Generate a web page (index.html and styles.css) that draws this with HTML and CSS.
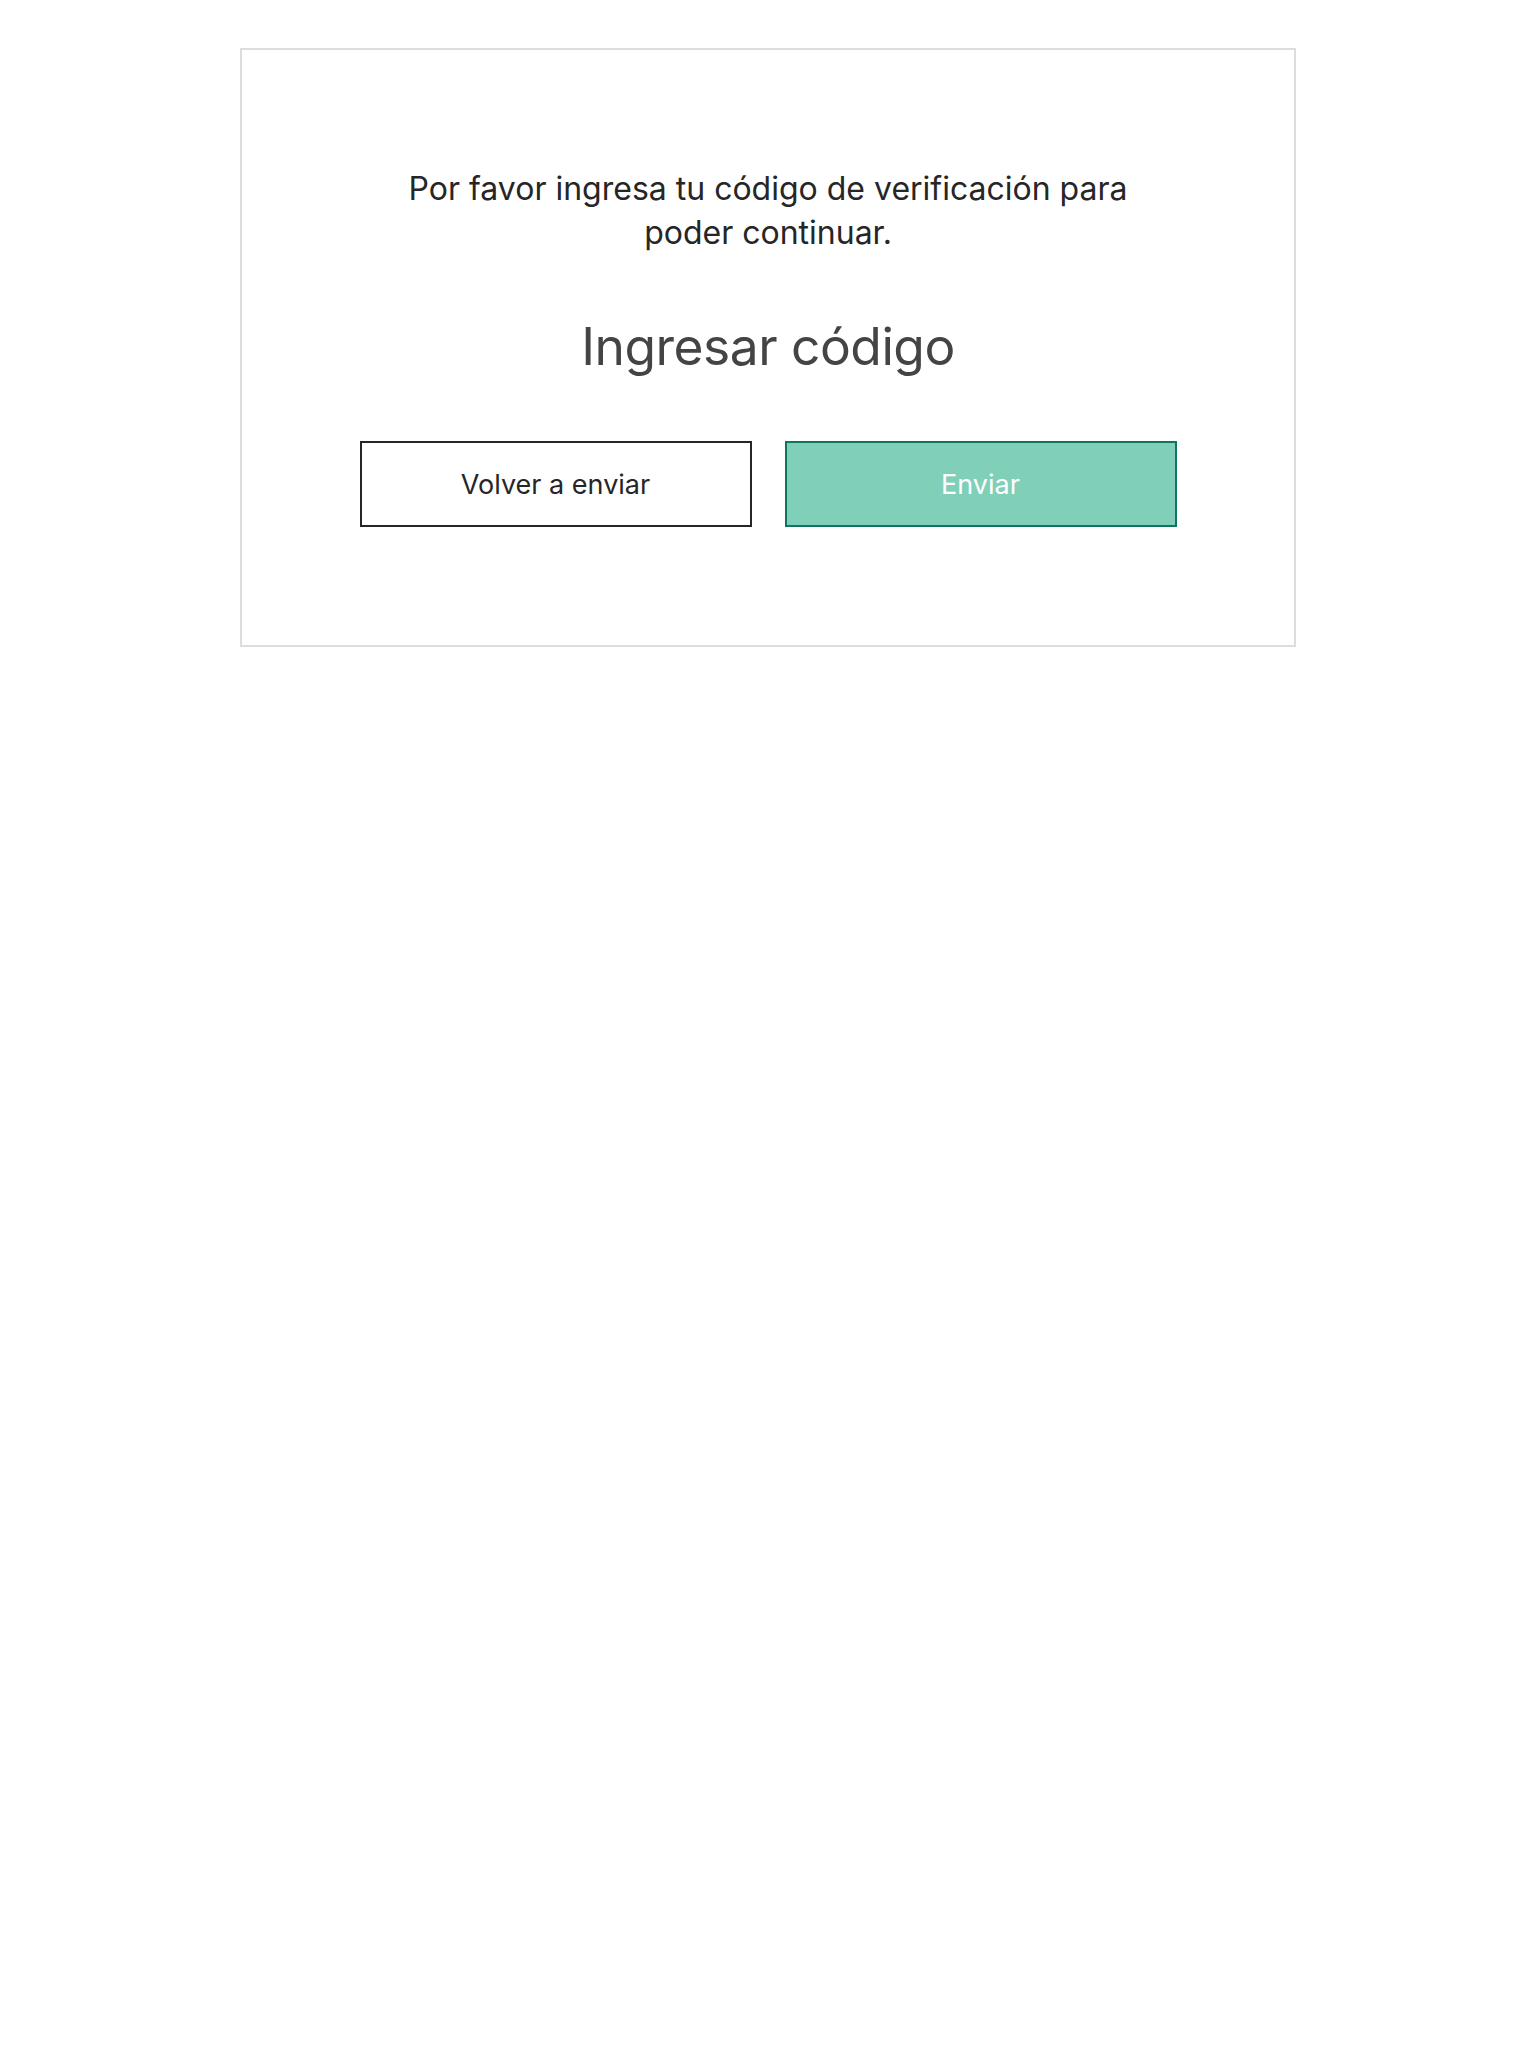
FILE: index.html
```html
<!DOCTYPE html>
<html lang="es">
<head>
<meta charset="utf-8">
<title>Ingresar código</title>
<link rel="stylesheet" href="styles.css">
</head>
<body>
<main class="card">
  <p class="lead">Por favor ingresa tu código de verificación para poder continuar.</p>
  <h1 class="title">Ingresar código</h1>
  <div class="actions">
    <button class="btn btn-outline" type="button">Volver a enviar</button>
    <button class="btn btn-primary" type="button">Enviar</button>
  </div>
</main>
</body>
</html>
```
FILE: styles.css
```css
html, body {
  margin: 0;
  padding: 0;
  background: #ffffff;
}
body {
  font-family: Inter, "Noto Sans", sans-serif;
  padding-top: 48px;
}
.card {
  box-sizing: border-box;
  width: 1056px;
  height: 599px;
  margin: 0 auto;
  border: 2px solid #dddddd;
  display: flex;
  flex-direction: column;
  align-items: center;
  padding-top: 117px;
}
.lead {
  margin: 0;
  max-width: 760px;
  text-align: center;
  font-size: 32px;
  line-height: 44px;
  color: #262626;
}
.title {
  margin: 59px 0 0;
  font-weight: 400;
  font-size: 51.5px;
  line-height: 64px;
  color: #444444;
  letter-spacing: -0.5px;
}
.actions {
  display: flex;
  gap: 33px;
  margin-top: 63px;
}
.btn {
  box-sizing: border-box;
  width: 392px;
  height: 86px;
  font-family: inherit;
  font-size: 27px;
  border-radius: 0;
  cursor: pointer;
}
.btn-outline {
  background: #ffffff;
  border: 2px solid #262626;
  color: #262626;
}
.btn-primary {
  background: #80cfb8;
  border: 2px solid #0d7561;
  color: #ffffff;
}
```
